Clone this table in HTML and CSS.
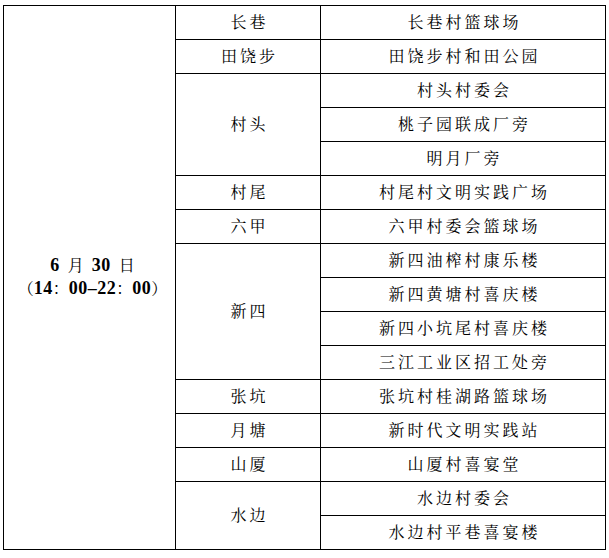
FILE: index.html
```html
<!DOCTYPE html>
<html lang="zh">
<head>
<meta charset="utf-8">
<link rel="stylesheet" href="styles.css">
</head>
<body>
<table class="sched">
<colgroup><col class="c1"><col class="c2"><col class="c3"></colgroup>
<tbody>
<tr><td class="date" rowspan="16"><span class="l1"><span class="n">6</span> 月 <span class="n">30</span> 日</span><br>（<span class="n">14</span>：<span class="n">00–22</span>：<span class="n">00</span>）</td><td>长巷</td><td>长巷村篮球场</td></tr>
<tr><td>田饶步</td><td>田饶步村和田公园</td></tr>
<tr><td rowspan="3">村头</td><td>村头村委会</td></tr>
<tr><td>桃子园联成厂旁</td></tr>
<tr><td>明月厂旁</td></tr>
<tr><td>村尾</td><td>村尾村文明实践广场</td></tr>
<tr><td>六甲</td><td>六甲村委会篮球场</td></tr>
<tr><td rowspan="4">新四</td><td>新四油榨村康乐楼</td></tr>
<tr><td>新四黄塘村喜庆楼</td></tr>
<tr><td>新四小坑尾村喜庆楼</td></tr>
<tr><td>三江工业区招工处旁</td></tr>
<tr><td>张坑</td><td>张坑村桂湖路篮球场</td></tr>
<tr><td>月塘</td><td>新时代文明实践站</td></tr>
<tr><td>山厦</td><td>山厦村喜宴堂</td></tr>
<tr><td rowspan="2">水边</td><td>水边村委会</td></tr>
<tr><td>水边村平巷喜宴楼</td></tr>
</tbody>
</table>
</body>
</html>
```
FILE: styles.css
```css
html, body {
  margin: 0;
  padding: 0;
  background: #fff;
}
body {
  padding: 5px 0 0 3px;
}
.sched {
  border-collapse: collapse;
  table-layout: fixed;
  width: 602px;
  font-family: "Liberation Serif", "Noto Serif CJK SC", "Noto Sans CJK SC", serif;
  font-size: 16px;
  color: #000;
}
.c1 { width: 172px; }
.c2 { width: 145px; }
.c3 { width: 285px; }
.sched td {
  border: 1px solid #000;
  height: 33px;
  padding: 0 0 0 3px;
  text-align: center;
  vertical-align: middle;
  letter-spacing: 3px;
  line-height: 20px;
}
.sched td.date {
  letter-spacing: 0;
  padding: 0 0 2px 6px;
  line-height: 22px;
  font-size: 16px;
}
.l1 {
  word-spacing: 4px;
}
.n {
  font-weight: bold;
  font-size: 18px;
  letter-spacing: 0.5px;
}
```
